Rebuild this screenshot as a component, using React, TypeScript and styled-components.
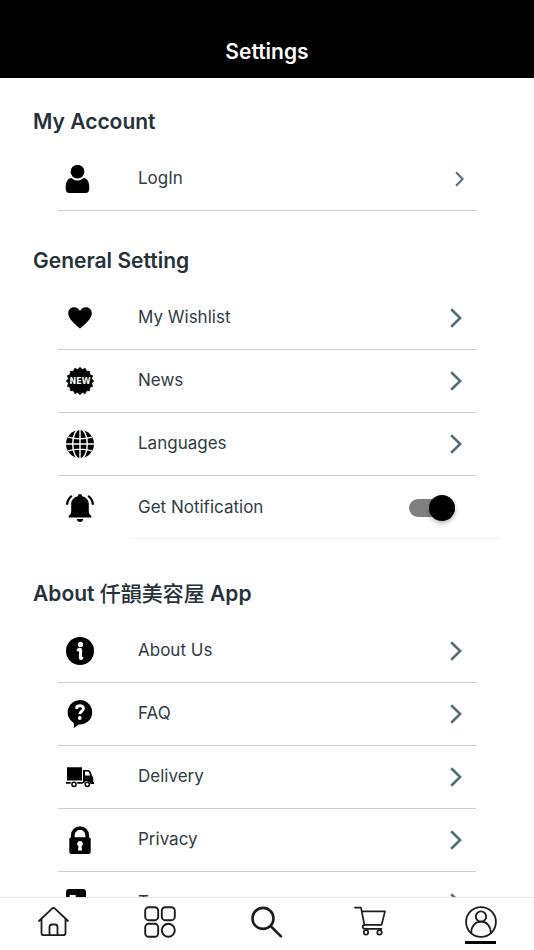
import React, { useState } from "react";
import styled, { createGlobalStyle } from "styled-components";

const GlobalStyle = createGlobalStyle`
  *, *::before, *::after { box-sizing: border-box; }
  body { margin: 0; background: #fff; }
  body, button { font-family: Inter, "Noto Sans CJK TC", sans-serif; }
`;

const Screen = styled.div`
  display: flex;
  flex-direction: column;
  height: 100vh;
  color: #263238;
  background: #fff;
`;

const Header = styled.header`
  display: flex;
  flex: none;
  justify-content: center;
  padding: 40px 16px 14px;
  background: #000;
`;

const Title = styled.h1`
  margin: 0;
  color: #fff;
  font-size: 21px;
  font-weight: 600;
  line-height: 24px;
`;

const Content = styled.main`
  flex: 1;
  min-height: 0;
  padding-top: 32px;
  overflow-y: auto;
  scrollbar-width: none;
`;

const Section = styled.section<{ $gap?: number }>`
  margin-top: ${(p) => p.$gap ?? 0}px;
`;

const SectionTitle = styled.h2`
  margin: 0 0 14px;
  padding: 0 33px;
  font-size: 21px;
  font-weight: 600;
  line-height: 24px;
`;

const ShopName = styled.span`
  font-weight: 500;
`;

const List = styled.ul`
  margin: 0;
  padding: 0;
  list-style: none;
`;

const RowLink = styled.a<{ $compact?: boolean }>`
  display: flex;
  align-items: center;
  height: 63px;
  margin: 0 58px;
  padding: 0 ${(p) => (p.$compact ? 12 : 14)}px 0 ${(p) => (p.$compact ? 6 : 8)}px;
  border-bottom: 1px solid #cdcdcd;
  color: inherit;
  text-decoration: none;
`;

const ToggleRow = styled.label`
  display: flex;
  align-items: center;
  height: 63px;
  margin: 0 33px 0 58px;
  padding: 0 46px 0 8px;
  background: linear-gradient(#f1f1f1, #f1f1f1) right bottom / calc(100% - 71px) 1px no-repeat;
`;

const IconSlot = styled.span<{ $compact?: boolean }>`
  display: flex;
  flex: none;
  width: ${(p) => (p.$compact ? 74 : 72)}px;
  color: #000;
`;

const RowText = styled.span`
  flex: 1;
  padding-bottom: 2px;
  color: #2f3c43;
  font-size: 17px;
  line-height: 24px;
`;

const Switch = styled.input`
  display: flex;
  align-items: center;
  justify-content: flex-end;
  appearance: none;
  width: 46px;
  height: 18px;
  margin: 0;
  border-radius: 9px;
  background: #808080;
  cursor: pointer;

  &::before {
    content: "";
    flex: none;
    width: 26px;
    height: 26px;
    border-radius: 50%;
    background: #000;
    box-shadow: 0 2px 4px rgba(0, 0, 0, 0.3);
  }

  &:not(:checked) {
    justify-content: flex-start;
    background: #c4c4c4;
  }
`;

const TabBar = styled.nav`
  display: grid;
  flex: none;
  grid-template-columns: repeat(5, 1fr);
  height: 53px;
  border-top: 1px solid #e8e8e8;
  background: #fff;
`;

const Tab = styled.button`
  display: flex;
  flex-direction: column;
  align-items: center;
  gap: 3px;
  padding: 8px 0 0;
  border: 0;
  background: none;
  color: #1c1c1c;
  cursor: pointer;
`;

const TabMarker = styled.span`
  width: 31px;
  height: 3px;
  background: #000;
`;

const Icon = ({ children, size = 28 }: { children: React.ReactNode; size?: number }) => (
  <svg width={size} height={size} viewBox={`0 0 ${size} ${size}`} fill="currentColor" aria-hidden="true">
    {children}
  </svg>
);

const Chevron = ({ small }: { small?: boolean }) => (
  <svg width={small ? 9 : 12} height={small ? 16 : 20} viewBox={small ? "0 0 9 16" : "0 0 12 20"} fill="none" stroke="#546e7a" aria-hidden="true">
    {small ? <path d="M1 1.2 7.7 8 1 14.8" strokeWidth="2" /> : <path d="M1.2 1.2 10.2 10l-9 8.8" strokeWidth="2.600" />}
  </svg>
);

const UserIcon = () => (
  <Icon>
    <circle cx="13.5" cy="6.7" r="6.9" />
    <path d="M6.1 13.2C2.9 14.4 1.7 17.8 1.7 23c0 3.7 1.3 5 4.5 5h14.6c3.2 0 4.5-1.3 4.5-5 0-5.2-1.2-8.600-4.400-9.800-1-.300-1.700.100-2.600.700-3.100 2-6.500 2-9.600 0-.900-.600-1.600-1-2.600-.700Z" />
  </Icon>
);

const HeartIcon = () => (
  <Icon>
    <path d="M14 24.600C10 21.200 2.200 15.200 2.200 9.300 2.200 5.600 5 3.300 8 3.300c2.700 0 4.900 1.400 6 3.700 1.100-2.300 3.300-3.700 6-3.700 3 0 5.800 2.300 5.800 6 0 5.900-7.800 11.900-11.800 15.300Z" />
  </Icon>
);

const badgePoints = Array.from({ length: 32 }, (_, i) => {
  const radius = i % 2 === 0 ? 13.6 : 11.6;
  const angle = (i * Math.PI) / 16;
  return `${14 + radius * Math.sin(angle)},${14 - radius * Math.cos(angle)}`;
}).join(" ");

const NewIcon = () => (
  <Icon>
    <polygon points={badgePoints} stroke="currentColor" strokeWidth="0.9" strokeLinejoin="round" />
    <text x="14" y="17" fill="#fff" fontFamily="DejaVu Sans" fontSize="8" fontWeight="700" textAnchor="middle">NEW</text>
  </Icon>
);

const GlobeIcon = () => (
  <Icon>
    <circle cx="14" cy="14" r="14" />
    <g fill="none" stroke="#fff" strokeWidth="1.400">
      <path d="M14 0v28M0 14h28M2 7.200c7.500 2.100 16.500 2.100 24 0M2 20.800c7.500-2.100 16.500-2.100 24 0" />
      <ellipse cx="14" cy="14" rx="7.300" ry="15" />
    </g>
  </Icon>
);

const BellIcon = () => (
  <Icon>
    <path d="M14 0c1.400 0 2.200 1 2.200 2.300 4.200 1 6.600 4 6.600 8.300v7c0 2.300.9 3.100 2.200 3.800.7.400.6 2.100-.4 2.100H3.400c-1 0-1.100-1.700-.4-2.100 1.300-.700 2.200-1.500 2.200-3.800v-7c0-4.300 2.400-7.300 6.600-8.300C11.800 1 12.600 0 14 0ZM10.800 25h6.400c-.2 2-1.400 3-3.200 3s-3-1-3.200-3Z" />
    <path d="M5.900 1.900C2.800 4 1.200 7 1.100 10.800M22.100 1.900C25.200 4 26.800 7 26.900 10.800" fill="none" stroke="currentColor" strokeWidth="2.200" />
  </Icon>
);

const InfoIcon = () => (
  <Icon>
    <circle cx="14" cy="14" r="14" />
    <circle cx="14.500" cy="7.400" r="2.600" fill="#fff" />
    <path d="M12.200 12.900c1.200-.8 2.600-.9 2.500.5l-.4 7.400c0 1 .8.8 1.600.2" fill="none" stroke="#fff" strokeWidth="3" strokeLinecap="round" />
  </Icon>
);

const QuestionIcon = () => (
  <Icon>
    <path d="M14 0a12.300 12.300 0 1 1-1.700 24.500c-1.200 1.500-2.700 2.600-4.600 3.500.4-1.800.3-3.400 0-5.100A12.300 12.300 0 0 1 14 0Z" />
    <path d="M10.800 9V6.800c2.900-1.800 6.800-1.100 6.600 1.800-.2 2.400-3.400 2.800-3.500 5.600" fill="none" stroke="#fff" strokeWidth="2.900" />
    <circle cx="13.800" cy="18" r="1.900" fill="#fff" />
  </Icon>
);

const TruckIcon = () => (
  <Icon>
    <path d="M1 4.300h15v13.200H1ZM17 7h4.600c2.600 0 3.800 2.900 4.400 6l1.200.9v5.200H28v2h-3.600a3.300 3.300 0 0 0-6.300-1H17ZM0 19h5l-.6 1.700H0ZM11 19h6.500l-.6 1.700h-5.400Z" />
    <path d="M19 8.500h2.400c1.400 0 2.100 1.500 2.600 4h-5Z" fill="#fff" />
    <g fill="#fff" stroke="currentColor" strokeWidth="1.500">
      <circle cx="8" cy="21.300" r="2.100" />
      <circle cx="21.300" cy="21.300" r="2.100" />
    </g>
  </Icon>
);

const LockIcon = () => (
  <Icon>
    <path d="M6.800 13.600V9.200a7.200 7.200 0 0 1 14.400 0v4.400" fill="none" stroke="currentColor" strokeWidth="3.600" />
    <rect x="3.300" y="11.300" width="21.400" height="16.700" rx="2" />
    <path d="M14 15a2.800 2.800 0 0 1 1.500 5.200l.5 4.300h-4l.5-4.300A2.800 2.800 0 0 1 14 15Z" fill="#fff" />
  </Icon>
);

const DocumentIcon = () => (
  <Icon>
    <path d="M3 0h14a3 3 0 0 1 3 3v22h5v3H3a3 3 0 0 1-3-3V3a3 3 0 0 1 3-3Z" />
    <path d="M3.700 6h6v2h-6ZM3.700 12h12v2h-12ZM3.700 18h12v2h-12Z" fill="#fff" />
  </Icon>
);

const TabIcon = ({ children, weight = 1.8 }: { children: React.ReactNode; weight?: number }) => (
  <svg width="32" height="32" viewBox="0 0 32 32" fill="none" stroke="currentColor" strokeWidth={weight} strokeLinecap="round" strokeLinejoin="round" overflow="visible" aria-hidden="true">
    {children}
  </svg>
);

const tabs = [
  {
    name: "Home",
    icon: (
      <TabIcon>
        <path d="M2 15 15 2.600q1.500-1.300 3 0L31 15M4.500 13v14q0 2.200 2.200 2.200h19.600q2.200 0 2.200-2.200V13M12.500 29v-8q0-2.500 2.500-2.500h3q2.500 0 2.500 2.500v8" />
      </TabIcon>
    ),
  },
  {
    name: "Categories",
    icon: (
      <TabIcon weight={1.9}>
        <rect x="1.200" y="1.200" width="13" height="13" rx="3.500" />
        <rect x="17.800" y="1.200" width="13" height="13" rx="3.500" />
        <rect x="1.200" y="17.800" width="13" height="13" rx="3.500" />
        <circle cx="24.300" cy="24.300" r="6.500" />
      </TabIcon>
    ),
  },
  {
    name: "Search",
    icon: (
      <TabIcon weight={2.6}>
        <circle cx="12" cy="12.400" r="10.500" />
        <path d="m20 20.400 10 10" />
      </TabIcon>
    ),
  },
  {
    name: "Cart",
    icon: (
      <TabIcon weight={1.7}>
        <path d="M-3 1.600h6l3.400 17.200h17.200L27 5.400H4M6.400 18.800c-2.600.5-2.300 4 .6 4h16.500" />
        <circle cx="8" cy="26.400" r="2.200" />
        <circle cx="21.500" cy="26.400" r="2.200" />
      </TabIcon>
    ),
  },
  {
    name: "Profile",
    icon: (
      <TabIcon>
        <circle cx="16" cy="16" r="14.900" />
        <circle cx="16" cy="10.500" r="5.200" />
        <path d="M6.200 27c0-7 4-11.300 9.800-11.300S25.800 20 25.800 27" />
      </TabIcon>
    ),
  },
];

interface RowProps {
  icon: React.ReactNode;
  label: string;
  compact?: boolean;
}

const Row = ({ icon, label, compact }: RowProps) => (
  <li>
    <RowLink href="#" $compact={compact}>
      <IconSlot $compact={compact}>{icon}</IconSlot>
      <RowText>{label}</RowText>
      <Chevron small={compact} />
    </RowLink>
  </li>
);

export default function App() {
  const [notify, setNotify] = useState(true);
  const [active, setActive] = useState("Profile");

  return (
    <Screen>
      <GlobalStyle />
      <Header>
        <Title>Settings</Title>
      </Header>
      <Content>
        <Section>
          <SectionTitle>My Account</SectionTitle>
          <List>
            <Row icon={<UserIcon />} label="LogIn" compact />
          </List>
        </Section>
        <Section $gap={38}>
          <SectionTitle>General Setting</SectionTitle>
          <List>
            <Row icon={<HeartIcon />} label="My Wishlist" />
            <Row icon={<NewIcon />} label="News" />
            <Row icon={<GlobeIcon />} label="Languages" />
            <li>
              <ToggleRow>
                <IconSlot><BellIcon /></IconSlot>
                <RowText>Get Notification</RowText>
                <Switch type="checkbox" role="switch" checked={notify} onChange={(e) => setNotify(e.target.checked)} />
              </ToggleRow>
            </li>
          </List>
        </Section>
        <Section $gap={43}>
          <SectionTitle>About <ShopName>仟韻美容屋</ShopName> App</SectionTitle>
          <List>
            <Row icon={<InfoIcon />} label="About Us" />
            <Row icon={<QuestionIcon />} label="FAQ" />
            <Row icon={<TruckIcon />} label="Delivery" />
            <Row icon={<LockIcon />} label="Privacy" />
            <Row icon={<DocumentIcon />} label="Terms" />
          </List>
        </Section>
      </Content>
      <TabBar aria-label="Main">
        {tabs.map((tab) => (
          <Tab key={tab.name} type="button" aria-label={tab.name} onClick={() => setActive(tab.name)}>
            {tab.icon}
            {active === tab.name && <TabMarker />}
          </Tab>
        ))}
      </TabBar>
    </Screen>
  );
}
